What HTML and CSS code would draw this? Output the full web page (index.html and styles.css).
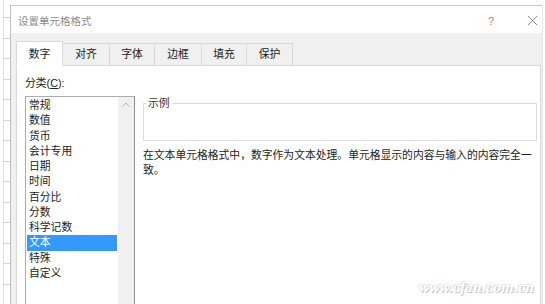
FILE: index.html
```html
<!DOCTYPE html>
<html lang="zh-CN">
<head>
  <meta charset="UTF-8" />
  <meta name="viewport" content="width=device-width, initial-scale=1">
  <title>设置单元格格式</title>
  <link rel="stylesheet" href="styles.css">
</head>
<body>

<div class="screen">
  <div class="sheet"></div>

  <div class="dialog">
    <div class="titlebar">
      <span class="title">设置单元格格式</span>
      <span class="help">?</span>
      <span class="close">
        <svg width="11" height="11" viewBox="0 0 11 11"><path d="M1 1 L10 10 M10 1 L1 10" stroke="#8a8a8a" stroke-width="1" fill="none"/></svg>
      </span>
    </div>

    <div class="dialog-body">
      <div class="tabs">
        <div class="tab active" style="width: 47px">数字</div>
        <div class="tab" style="width: 47px">对齐</div>
        <div class="tab" style="width: 45px">字体</div>
        <div class="tab" style="width: 47px">边框</div>
        <div class="tab" style="width: 45px">填充</div>
        <div class="tab" style="width: 46px">保护</div>
      </div>

      <div class="panel">
        <div class="label">分类(<u>C</u>):</div>
        <div class="panel-row">
          <div class="listbox">
            <ul class="items">
              <li>常规</li>
              <li>数值</li>
              <li>货币</li>
              <li>会计专用</li>
              <li>日期</li>
              <li>时间</li>
              <li>百分比</li>
              <li>分数</li>
              <li>科学记数</li>
              <li class="selected">文本</li>
              <li>特殊</li>
              <li>自定义</li>
            </ul>
            <div class="scrollbar">
              <svg width="8" height="5" viewBox="0 0 8 5"><path d="M0.5 4.5 L4 1 L7.5 4.5" stroke="#b4b4b4" stroke-width="1" fill="none"/></svg>
            </div>
          </div>

          <div class="detail">
            <fieldset class="sample">
              <legend>示例</legend>
              <div class="sample-value"></div>
            </fieldset>
            <p class="desc">在文本单元格格式中，数字作为文本处理。单元格显示的内容与输入的内容完全一致。</p>
          </div>
        </div>
      </div>
    </div>
  </div>
</div>

<div class="watermark">www.cfan.com.cn</div>

</body>
</html>
```

FILE: styles.css
```css
body {
  font-family: 'Liberation Sans', 'Noto Sans CJK SC', sans-serif;
  font-size: 10.8px;
  color: #222;
  background-color: white;
  margin: 0;
  padding: 0;
  width: 545px;
  height: 304px;
  overflow: hidden;
  position: relative;
}

.screen {
  display: flex;
  height: 304px;
}

/* bit of the worksheet behind the dialog */
.sheet {
  width: 10px;
  flex-shrink: 0;
  background: repeating-linear-gradient(to bottom, transparent 0 17px, #d6d6d6 17px 18px, transparent 18px 20.5px);
  box-shadow: inset 3px 0 0 white, inset 4px 0 0 #dedede;
}

.dialog {
  width: 531px;
  margin-top: 5px;
  border-top: 1px solid #c9c9c9;
  border-left: 1px solid #bdbdbd;
  border-right: 1px solid #e6e6e6;
  display: flex;
  flex-direction: column;
}

.titlebar {
  height: 27px;
  box-sizing: border-box;
  padding: 8px 0 0 7px;
  display: flex;
  align-items: flex-start;
  background: white;
  line-height: 15px;
}

.title {
  font-size: 10.5px;
  color: #8c8c8c;
}

.help {
  margin-left: auto;
  color: #8c8c8c;
  font-size: 11px;
}

.close {
  margin: 1px 4px 0 33px;
  height: 11px;
}

.dialog-body {
  flex: 1;
  background-color: #f0f0f0;
  padding: 0 1px 0 5px;
  overflow: hidden;
}

.tabs {
  height: 33px;
  display: flex;
  align-items: flex-end;
  margin-bottom: -1px;
  position: relative;
}

.tab {
  box-sizing: border-box;
  height: 23px;
  line-height: 21px;
  text-align: center;
  background-color: #f0f0f0;
  border: 1px solid #d9d9d9;
  border-left: none;
}

.tab.active {
  height: 25px;
  line-height: 25px;
  background-color: white;
  border-left: 1px solid #d9d9d9;
  border-bottom-color: white;
}

.panel {
  height: 250px;
  background: white;
  border: 1px solid #d9d9d9;
  padding: 10px 0 0 8px;
}

.label {
  line-height: 15px;
}

.label u {
  text-underline-offset: 1px;
}

.panel-row {
  display: flex;
  margin-top: 5px;
}

.listbox {
  width: 110px;
  height: 220px;
  box-sizing: border-box;
  border: 1px solid #acacac;
  border-right-color: #8f8f8f;
  display: flex;
}

.items {
  list-style: none;
  margin: 0;
  padding: 1px;
  width: 92px;
  box-sizing: border-box;
}

.items li {
  height: 15.25px;
  line-height: 15.25px;
  padding-left: 2px;
}

.items li.selected {
  background-color: #3399ff;
  color: white;
}

.scrollbar {
  width: 16px;
  background-color: #f0f0f0;
  display: flex;
  justify-content: center;
  padding-top: 5px;
  box-sizing: border-box;
}

.detail {
  width: 394px;
  margin-left: 8px;
}

.sample {
  margin: 0;
  padding: 0;
  min-width: 0;
  border: 1px solid #dcdcdc;
}

.sample legend {
  margin-left: 2px;
  padding: 0 2px;
  line-height: 15px;
  color: #333;
}

.sample-value {
  height: 29px;
}

.desc {
  margin: 7px 0 0;
  line-height: 15px;
}

.watermark {
  position: absolute;
  right: 11px;
  bottom: 9px;
  font-family: 'DejaVu Serif', serif;
  font-style: italic;
  font-weight: bold;
  font-size: 12px;
  color: white;
  text-shadow: 1px 1px 0 #c9c9c9, -1px -1px 0 #e4e4e4;
}
```
